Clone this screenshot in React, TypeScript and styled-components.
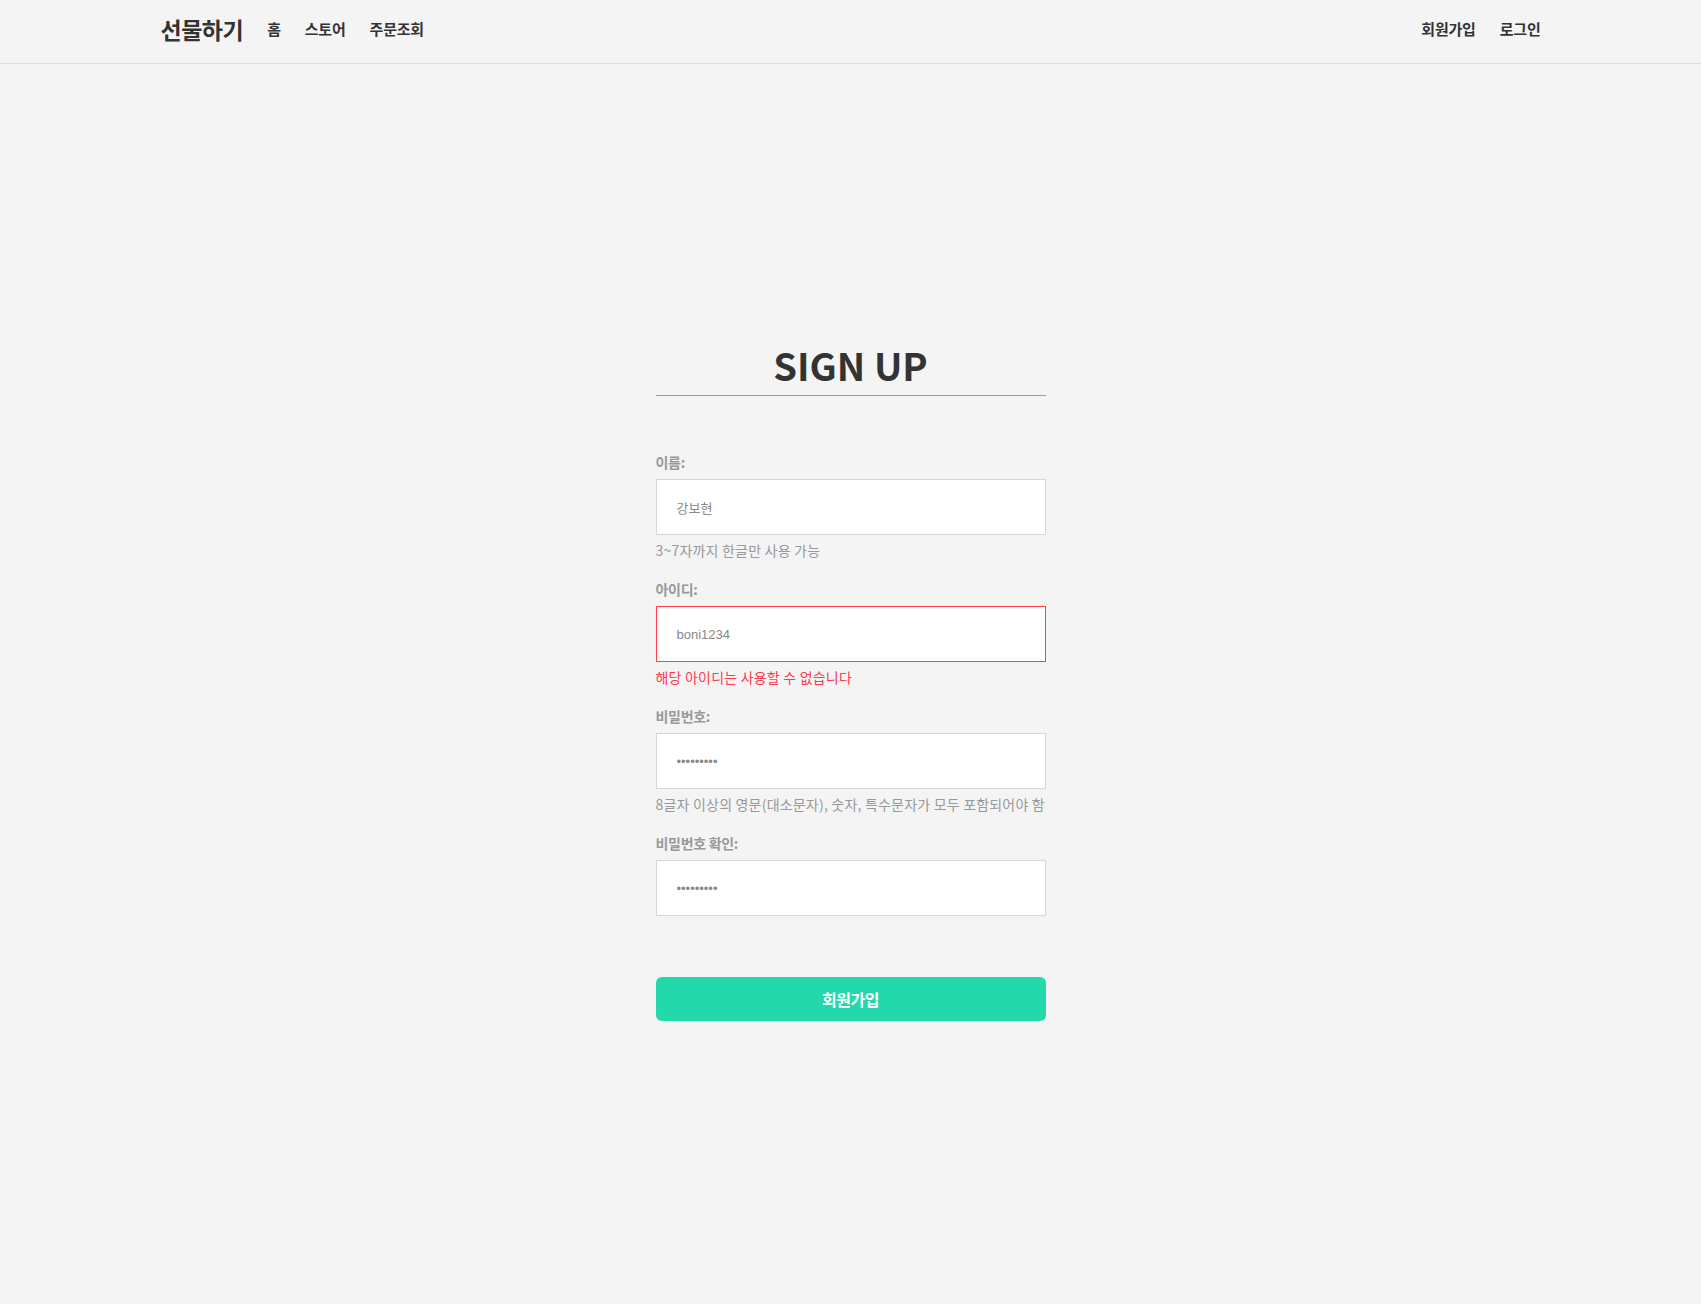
import React from "react";
import styled, { createGlobalStyle } from "styled-components";

const GlobalStyle = createGlobalStyle`
  * { box-sizing: border-box; }
  html, body { margin: 0; padding: 0; background: #f4f4f4; }
  body {
    font-family: "Noto Sans CJK KR", "Noto Sans", sans-serif;
    color: #333;
  }
`;

const Header = styled.header`
  height: 64px;
  border-bottom: 1px solid #dcdcdc;
  background: #f4f4f4;
`;

const HeaderInner = styled.div`
  max-width: 1380px;
  height: 100%;
  margin: 0 auto;
  padding-bottom: 6px;
  display: flex;
  align-items: center;
  justify-content: space-between;
`;

const NavGroup = styled.nav`
  display: flex;
  align-items: center;
  gap: 24px;
`;

const Logo = styled.a`
  font-size: 23px;
  line-height: 30px;
  font-weight: 700;
  color: #333;
  text-decoration: none;
  letter-spacing: -0.5px;
`;

const NavLink = styled.a`
  font-size: 15px;
  line-height: 30px;
  font-weight: 700;
  color: #333;
  text-decoration: none;
  letter-spacing: -0.2px;
`;

const Main = styled.main`
  display: flex;
  justify-content: center;
  padding-top: 276px;
  padding-bottom: 200px;
`;

const Form = styled.form`
  width: 390px;
  display: flex;
  flex-direction: column;
`;

const Title = styled.h1`
  margin: 0 0 56px;
  padding-bottom: 5px;
  text-align: center;
  font-size: 38px;
  line-height: 50px;
  font-weight: 700;
  color: #333;
  border-bottom: 1px solid #2dd4a4;
`;

const Fields = styled.div`
  display: flex;
  flex-direction: column;
  gap: 19px;
`;

const Field = styled.div`
  display: flex;
  flex-direction: column;
`;

const Label = styled.label`
  font-size: 14px;
  line-height: 20px;
  font-weight: 700;
  color: #999;
  margin-bottom: 7px;
  letter-spacing: -0.3px;
`;

const Input = styled.input<{ $error?: boolean }>`
  width: 100%;
  height: 56px;
  padding: 0 20px;
  background: #fff;
  border: 1.5px solid ${(p) => (p.$error ? "#ff4050" : "#d7d7d7")};
  border-radius: 0;
  outline: none;
  font-family: "Liberation Sans", "Noto Sans CJK KR", sans-serif;
  font-size: 13px;
  color: #888;
`;

const Help = styled.p<{ $error?: boolean }>`
  margin: 5px 0 0;
  font-size: 14px;
  line-height: 20px;
  color: ${(p) => (p.$error ? "#ff3b4b" : "#999")};
  letter-spacing: 0.2px;
  white-space: nowrap;
`;

const Submit = styled.button`
  margin-top: 61px;
  height: 44px;
  border: none;
  border-radius: 6px;
  background: #23d9ab;
  color: #fff;
  font-family: "Noto Sans CJK KR", sans-serif;
  font-size: 16px;
  font-weight: 700;
  letter-spacing: -0.5px;
  cursor: pointer;
`;

export default function App() {
  return (
    <>
      <GlobalStyle />
      <Header>
        <HeaderInner>
          <NavGroup>
            <Logo href="#">선물하기</Logo>
            <NavLink href="#">홈</NavLink>
            <NavLink href="#">스토어</NavLink>
            <NavLink href="#">주문조회</NavLink>
          </NavGroup>
          <NavGroup>
            <NavLink href="#">회원가입</NavLink>
            <NavLink href="#">로그인</NavLink>
          </NavGroup>
        </HeaderInner>
      </Header>
      <Main>
        <Form onSubmit={(e) => e.preventDefault()}>
          <Title>SIGN UP</Title>
          <Fields>
            <Field>
              <Label>이름:</Label>
              <Input defaultValue="강보현" />
              <Help>3~7자까지 한글만 사용 가능</Help>
            </Field>
            <Field>
              <Label>아이디:</Label>
              <Input $error defaultValue="boni1234" />
              <Help $error>해당 아이디는 사용할 수 없습니다</Help>
            </Field>
            <Field>
              <Label>비밀번호:</Label>
              <Input type="password" defaultValue="123456789" />
              <Help>8글자 이상의 영문(대소문자), 숫자, 특수문자가 모두 포함되어야 함</Help>
            </Field>
            <Field>
              <Label>비밀번호 확인:</Label>
              <Input type="password" defaultValue="123456789" />
            </Field>
          </Fields>
          <Submit type="submit">회원가입</Submit>
        </Form>
      </Main>
    </>
  );
}
